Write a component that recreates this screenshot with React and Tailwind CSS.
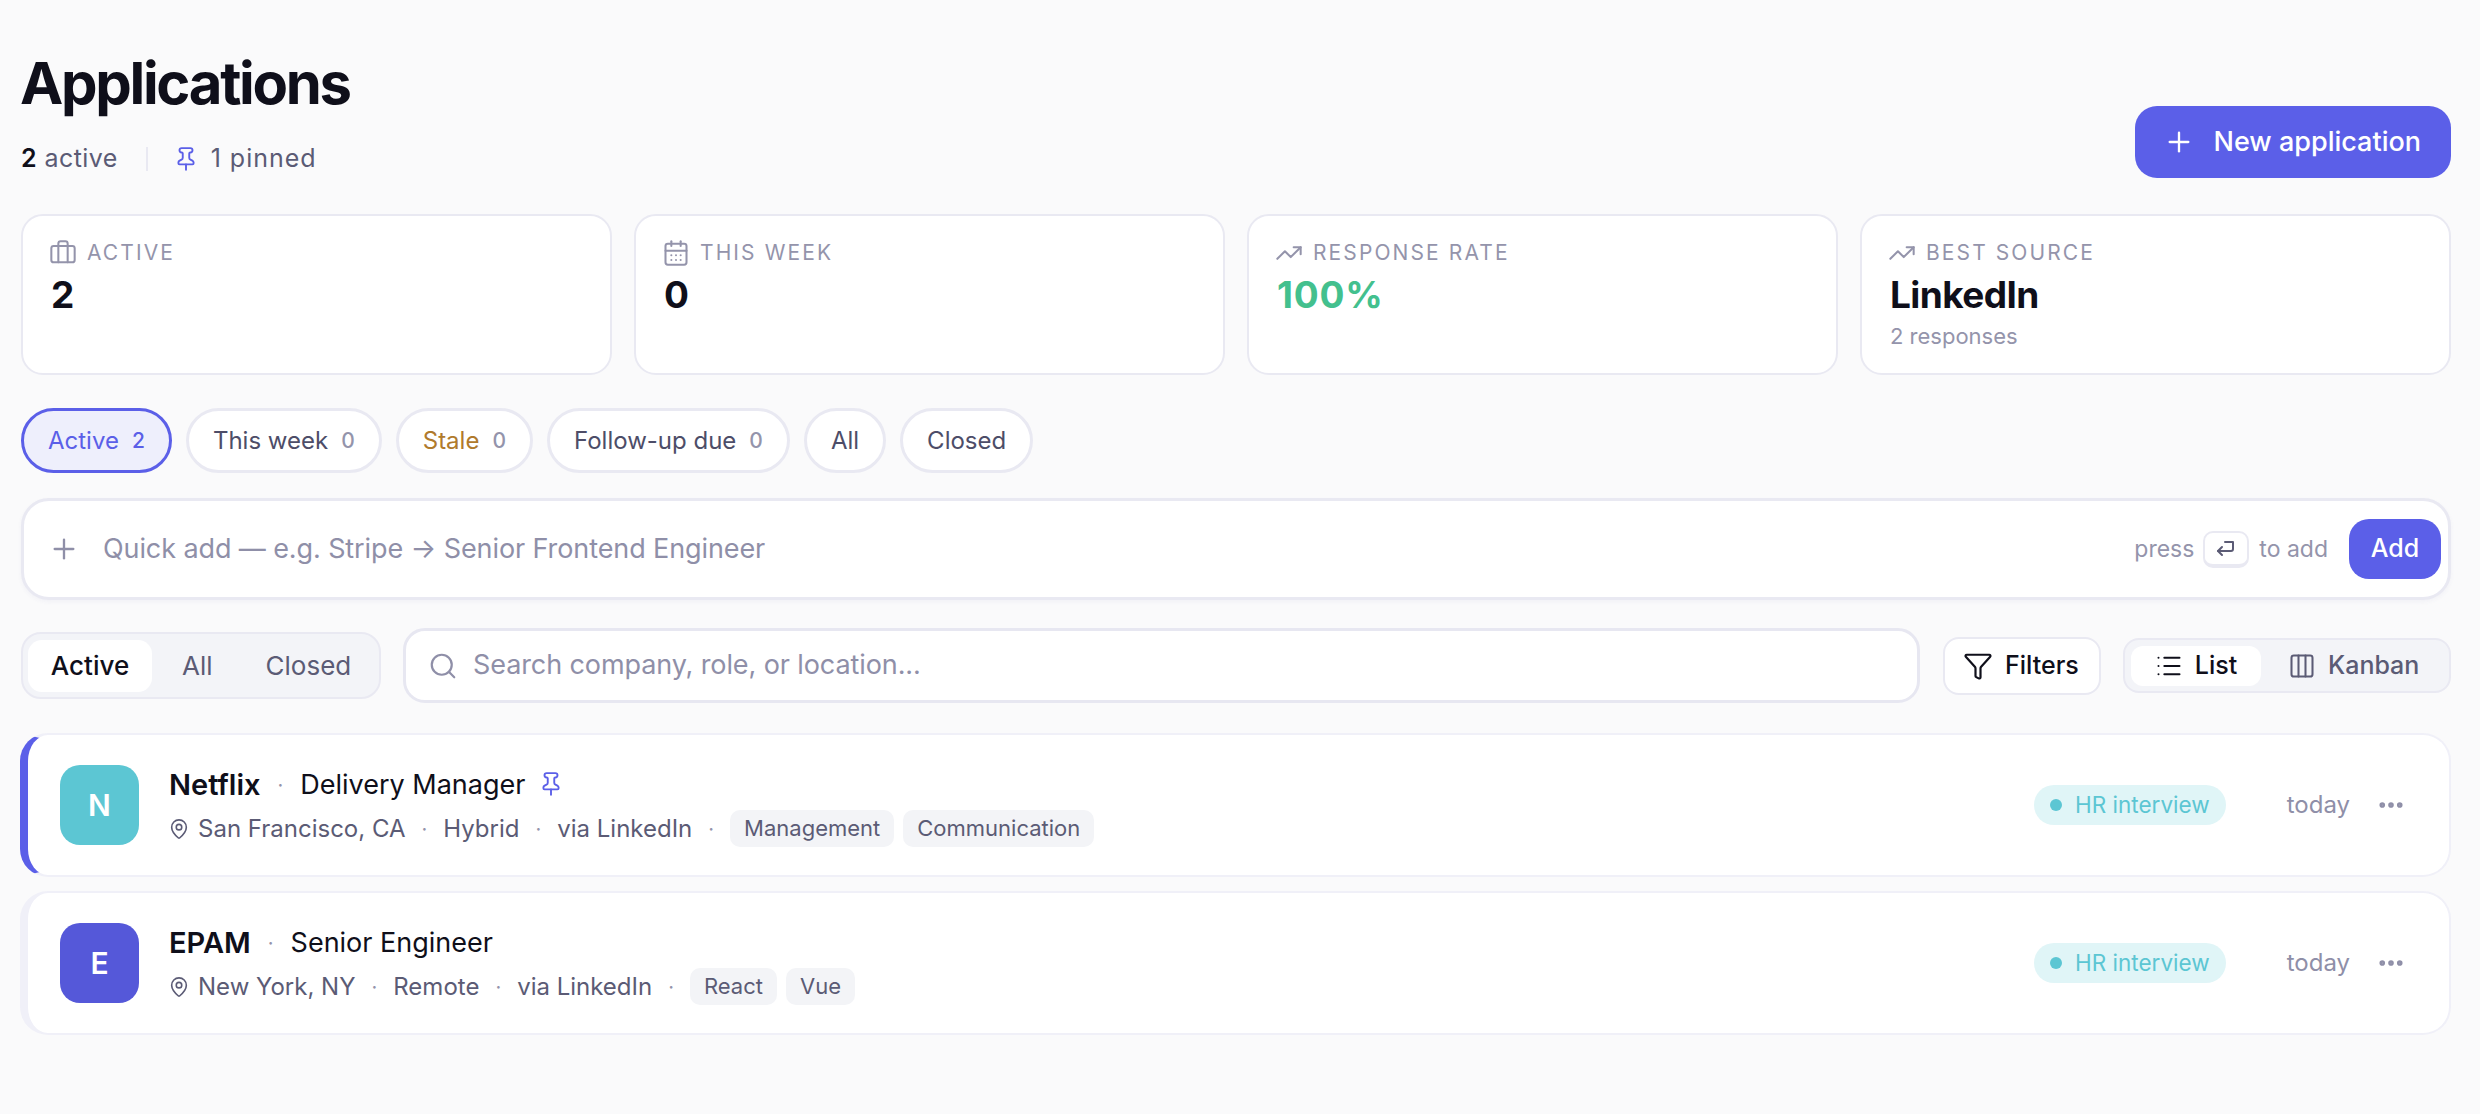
import React from 'react';
import {
  Briefcase,
  CalendarDays,
  Columns3,
  Ellipsis,
  Funnel,
  List,
  MapPin,
  Pin,
  Plus,
  Search,
  TrendingUp,
} from 'lucide-react';

const stats = [
  { icon: Briefcase, label: 'Active', value: '2', valueClass: 'text-[#0f0f1a]' },
  { icon: CalendarDays, label: 'This week', value: '0', valueClass: 'text-[#0f0f1a]' },
  { icon: TrendingUp, label: 'Response rate', value: '100%', valueClass: 'text-[#43c08e] tracking-[0.8px]' },
  { icon: TrendingUp, label: 'Best source', value: 'LinkedIn', valueClass: 'text-[#0f0f1a] tracking-[-0.6px]', sub: '2 responses' },
];

const pills = [
  { label: 'Active', count: 2, active: true },
  { label: 'This week', count: 0 },
  { label: 'Stale', count: 0, labelClass: 'text-[#b07a2c]' },
  { label: 'Follow-up due', count: 0 },
  { label: 'All' },
  { label: 'Closed' },
];

const applications = [
  {
    letter: 'N',
    color: 'bg-[#5cc6d3]',
    company: 'Netflix',
    role: 'Delivery Manager',
    pinned: true,
    location: 'San Francisco, CA',
    mode: 'Hybrid',
    tags: ['Management', 'Communication'],
  },
  {
    letter: 'E',
    color: 'bg-[#5558d9]',
    company: 'EPAM',
    role: 'Senior Engineer',
    location: 'New York, NY',
    mode: 'Remote',
    tags: ['React', 'Vue'],
  },
];

const StatCard = ({ stat }) => {
  const Icon = stat.icon;
  return (
    <div className="h-[161px] rounded-[22px] border-2 border-[#e9e9f2] bg-white px-[28px] pt-[23px]">
      <div className="-ml-[2px] flex items-center gap-[10px] text-[#9494ab]">
        <Icon className="h-[28px] w-[28px]" strokeWidth={1.75} />
        <span className="text-[21px] font-normal uppercase leading-[28px] tracking-[2.1px]">{stat.label}</span>
      </div>
      <div className={`mt-[5px] text-[37px] font-bold leading-[46px] ${stat.valueClass}`}>{stat.value}</div>
      {stat.sub && <div className="mt-[5px] text-[22px] leading-[26px] text-[#9494ab]">{stat.sub}</div>}
    </div>
  );
};

const FilterPill = ({ pill }) => (
  <button
    className={`flex h-[65px] items-center gap-[13px] rounded-full border-[3px] px-[24px] text-[24px] font-normal ${
      pill.active ? 'border-[#5b5fe8] bg-[#eeeffc] text-[#5b5fe8]' : 'border-[#e9e9f2] bg-white text-[#4d4d68]'
    }`}
  >
    <span className={pill.labelClass}>{pill.label}</span>
    {pill.count !== undefined && (
      <span className={`text-[21px] font-medium ${pill.active ? 'text-[#5b5fe8]' : 'text-[#9494ab]'}`}>{pill.count}</span>
    )}
  </button>
);

const Dot = () => <span className="mx-[16px] text-[20px] leading-none text-[#9494ab]">·</span>;

const ApplicationRow = ({ app }) => (
  <div
    className={`flex h-[144px] items-center rounded-[28px] border-2 border-l-[8px] border-[#f0f0f8] bg-white pl-[32px] pr-[43px] ${
      app.pinned ? 'border-l-[#5b5fe8]' : ''
    }`}
  >
    <div className={`flex h-[80px] w-[79px] shrink-0 items-center justify-center rounded-[20px] text-[30px] font-semibold text-white ${app.color}`}>
      {app.letter}
    </div>
    <div className="ml-[30px] flex flex-col pt-[3px]">
      <div className="flex h-[38px] items-center">
        <span className="text-[29px] font-semibold text-[#0f0f1a]">{app.company}</span>
        <span className="mx-[17px] text-[20px] leading-none text-[#9494ab]">·</span>
        <span className="text-[27px] font-normal text-[#0f0f1a]">{app.role}</span>
        {app.pinned && <Pin className="ml-[13px] h-[26px] w-[26px] -translate-y-[1px] text-[#5b5fe8]" strokeWidth={1.75} />}
      </div>
      <div className="mt-[6px] flex h-[37px] items-center text-[24px] text-[#5b5b75]">
        <MapPin className="-ml-[1px] mr-[8px] h-[22px] w-[22px] text-[#5b5b75]" strokeWidth={1.75} />
        <span>{app.location}</span>
        <Dot />
        <span>{app.mode}</span>
        <Dot />
        <span>via LinkedIn</span>
        <Dot />
        <div className="flex gap-[9px]">
          {app.tags.map((tag) => (
            <span key={tag} className="flex h-[37px] items-center rounded-[10px] bg-[#f3f4f7] px-[14px] text-[22px] text-[#5b5b75]">
              {tag}
            </span>
          ))}
        </div>
      </div>
    </div>
    <div className="ml-auto flex items-center">
      <span className="flex h-[40px] items-center gap-[13px] rounded-full bg-[#e0f5f7] px-[16px] text-[22.5px] text-[#5cc6d3]">
        <span className="h-[12px] w-[12px] rounded-full bg-[#5cc6d3]" />
        HR interview
      </span>
      <span className="ml-[61px] text-[24px] text-[#8f8fa8]">today</span>
      <Ellipsis className="ml-[26px] h-[30px] w-[30px] text-[#8f8fa8]" strokeWidth={2.5} />
    </div>
  </div>
);

export default function App() {
  return (
    <div className="min-h-screen bg-[#fafafb] pl-[20px] pr-[29px] pt-[48px] font-['Inter',sans-serif]">
      <header className="flex items-end justify-between">
        <div>
          <h1 className="text-[58px] font-bold leading-[70px] tracking-[-2.3px] text-[#0f0f1a]">Applications</h1>
          <div className="mb-[4px] ml-[1px] mt-[26px] flex h-[30px] items-center text-[25px] text-[#5b5b75]">
            <span className="font-semibold text-[#0f0f1a]">2</span>
            <span className="ml-[8px] tracking-[0.4px]">active</span>
            <span className="ml-[28px] h-[24px] w-[2px] bg-[#e9e9f2]" />
            <Pin className="ml-[25px] h-[26px] w-[26px] text-[#5b5fe8]" strokeWidth={1.75} />
            <span className="ml-[12px] tracking-[1px]">1 pinned</span>
          </div>
        </div>
        <button className="flex h-[72px] items-center gap-[19px] rounded-[22px] bg-[#5b5fe8] pl-[28px] pr-[30px] text-[27px] font-medium text-white">
          <Plus className="h-[32px] w-[32px]" strokeWidth={1.75} />
          New application
        </button>
      </header>

      <section className="ml-[1px] mt-[36px] grid grid-cols-4 gap-[22px]">
        {stats.map((stat) => (
          <StatCard key={stat.label} stat={stat} />
        ))}
      </section>

      <div className="ml-[1px] mt-[33px] flex gap-[14px]">
        {pills.map((pill) => (
          <FilterPill key={pill.label} pill={pill} />
        ))}
      </div>

      <div className="ml-[1px] mt-[25px] flex h-[102px] items-center rounded-[28px] border-[3px] border-[#e9e9f2] bg-white pl-[24px] pr-[7px] shadow-[0_2px_4px_rgba(80,80,160,0.05)]">
        <Plus className="h-[32px] w-[32px] text-[#8f8fa8]" strokeWidth={1.75} />
        <span className="ml-[23px] text-[27px] tracking-[-0.1px] text-[#8f8fa8]">Quick add — e.g. Stripe → Senior Frontend Engineer</span>
        <span className="ml-auto text-[23px] text-[#9494ab]">press</span>
        <span className="ml-[9px] flex h-[37px] w-[46px] items-center justify-center rounded-[10px] border-2 border-b-[4px] border-[#e9e9f2] bg-white">
          <svg width="20" height="18" viewBox="0 0 20 18" fill="none" stroke="#5b5b75" strokeWidth="2" strokeLinecap="round" strokeLinejoin="round">
            <path d="M9 3h8v7a2 2 0 0 1-2 2H2" />
            <path d="M6 8l-4 4 4 4" />
          </svg>
        </span>
        <span className="ml-[10px] text-[23px] text-[#9494ab]">to add</span>
        <button className="ml-[21px] h-[60px] w-[92px] rounded-[20px] bg-[#5b5fe8] text-[25px] font-medium text-white">Add</button>
      </div>

      <div className="ml-[1px] mt-[28px] flex items-center">
        <div className="flex h-[67px] w-[360px] items-center rounded-[20px] border-2 border-[#e9e9f2] bg-[#f3f4f8] pl-[5px] text-[26px] text-[#5b5b75]">
          <span className="flex h-[52px] w-[124px] items-center justify-center rounded-[14px] bg-white font-medium text-[#0f0f1a]">Active</span>
          <span className="ml-[30px]">All</span>
          <span className="ml-[53px]">Closed</span>
        </div>
        <div className="ml-[22px] flex h-[75px] flex-1 items-center rounded-[22px] border-[3px] border-[#e7e7f1] bg-white pl-[22px]">
          <Search className="h-[30px] w-[30px] text-[#8f8fa8]" strokeWidth={1.75} />
          <span className="ml-[15px] text-[27px] tracking-[-0.1px] text-[#8f8fa8]">Search company, role, or location...</span>
        </div>
        <button className="ml-[23px] flex h-[58px] w-[158px] items-center gap-[12px] rounded-[16px] border-2 border-[#e9e9f2] bg-white pl-[18px] text-[25px] font-medium text-[#0f0f1a]">
          <Funnel className="h-[30px] w-[30px]" strokeWidth={1.75} />
          Filters
        </button>
        <div className="ml-[22px] flex h-[55px] w-[328px] items-center rounded-[16px] border-2 border-[#e9e9f2] bg-[#f3f4f8] pl-[6px] text-[25px] font-medium">
          <span className="flex h-[40px] w-[130px] items-center justify-center gap-[12px] rounded-[12px] bg-white text-[#0f0f1a]">
            <List className="h-[28px] w-[28px]" strokeWidth={1.75} />
            List
          </span>
          <span className="ml-[27px] flex items-center gap-[12px] text-[#5b5b75]">
            <Columns3 className="h-[28px] w-[28px]" strokeWidth={1.75} />
            Kanban
          </span>
        </div>
      </div>

      <div className="mt-[30px] flex flex-col gap-[14px]">
        {applications.map((app) => (
          <ApplicationRow key={app.company} app={app} />
        ))}
      </div>
    </div>
  );
}
